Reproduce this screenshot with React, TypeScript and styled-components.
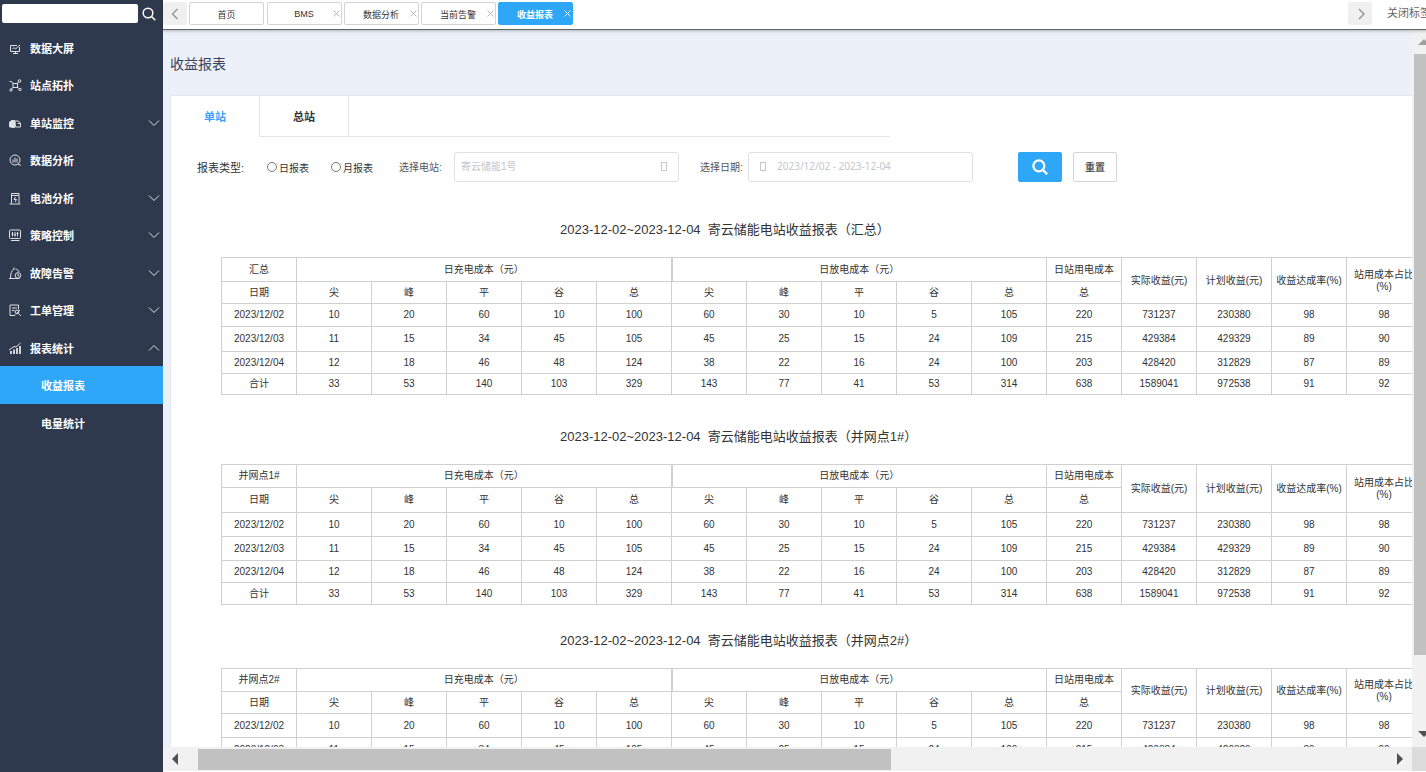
import React from "react";
import styled, { createGlobalStyle, css } from "styled-components";

const Global = createGlobalStyle`
  *, *::before, *::after { box-sizing: border-box; }
  body { margin: 0; }
  body, button, input, select {
    font-family: "Liberation Sans", "Noto Sans CJK SC", sans-serif;
  }
  body { overflow: hidden; color: #333; font-size: 11px; }
`;

const Shell = styled.div`
  display: flex;
  height: 100vh;
  overflow: hidden;
  background: #fff;
`;

/* ---------- sidebar ---------- */

const Sidebar = styled.aside`
  flex: 0 0 163px;
  background: #2f394d;
`;

const SearchRow = styled.form`
  display: flex;
  align-items: center;
  gap: 4px;
  height: 29px;
  padding: 0 2px 2px;
`;

const SearchInput = styled.input`
  width: 136px;
  height: 19px;
  border: 0;
  border-radius: 2px;
  background: #fff;
`;

const PlainButton = styled.button`
  display: flex;
  padding: 0;
  border: 0;
  background: none;
  color: inherit;
  cursor: pointer;
`;

const SearchIconButton = styled(PlainButton)`
  color: #fff;
`;

const Menu = styled.nav`
  display: flex;
  flex-direction: column;
`;

const MenuLink = styled.a<{ $sub?: boolean; $active?: boolean }>`
  display: flex;
  align-items: center;
  gap: 8px;
  height: 37px;
  padding: 0 3px 0 ${(p) => (p.$sub ? "41px" : "8px")};
  background: ${(p) => (p.$active ? "#2ea7f9" : "transparent")};
  color: #fff;
  font-size: 11px;
  font-weight: 700;
  text-decoration: none;

  &:nth-child(even) {
    height: 38px;
  }

  svg {
    opacity: 0.85;
  }
`;

const MenuText = styled.span`
  flex: 1;
`;

/* ---------- top tabs ---------- */

const Workspace = styled.div`
  display: flex;
  flex: 1;
  flex-direction: column;
  min-width: 0;
  margin-right: -10px;
`;

const TopBar = styled.header`
  z-index: 1;
  display: flex;
  flex: 0 0 30px;
  align-items: flex-start;
  padding-top: 2px;
  border-bottom: 1px solid #5f6565;
  background: #fff;
  box-shadow: 0 1px 3px rgba(0, 0, 0, 0.25);
`;

const ArrowButton = styled(PlainButton)`
  align-items: center;
  justify-content: center;
  width: 24px;
  height: 23px;
  border-radius: 2px;
  background: #f0f0f0;
  color: #999;
`;

const PageTabs = styled.div`
  display: flex;
  flex: 1;
  gap: 2px;
  margin-left: 2px;
`;

const PageTab = styled.div<{ $active?: boolean }>`
  display: flex;
  align-items: center;
  width: 75px;
  height: 23px;
  padding-right: 1px;
  border: 1px solid ${(p) => (p.$active ? "#2ea7f9" : "#d4d4d4")};
  border-radius: 2px;
  background: ${(p) => (p.$active ? "#2ea7f9" : "#fff")};
  color: ${(p) => (p.$active ? "#fff" : "#333")};
  font-weight: ${(p) => (p.$active ? 700 : 400)};

  &:first-child {
    margin-right: 1px;
  }
`;

const PageTabName = styled.a<{ $closable: boolean }>`
  flex: 1;
  padding: 1px 0 0 ${(p) => (p.$closable ? "7px" : "1px")};
  color: inherit;
  font-size: 9px;
  text-align: center;
  text-decoration: none;
`;

const TabClose = styled(PlainButton)<{ $active?: boolean }>`
  color: ${(p) => (p.$active ? "#fff" : "#b5b5b5")};
`;

const CloseTabs = styled(PlainButton)`
  width: 49px;
  margin-left: 15px;
  padding-top: 3px;
  color: #666;
  font-size: 11px;
  line-height: 16px;
  white-space: nowrap;
`;

/* ---------- scroll frame ---------- */

const Frame = styled.div`
  display: grid;
  flex: 1;
  grid-template-columns: minmax(0, 1fr) 24px;
  grid-template-rows: minmax(0, 1fr) 24px;
  min-height: 0;
  padding-bottom: 1px;
`;

const Viewport = styled.main`
  overflow: hidden;
  padding-left: 7px;
  background: #ebf0f9;
`;

const bar = css`
  display: flex;
  align-items: center;
  background: #f1f1f1;
  color: #505050;
`;

const VBar = styled.div`
  ${bar}
  flex-direction: column;
  padding: 6px 0 7px;

  svg:first-child {
    color: #a0a0a0;
  }
`;

const HBar = styled.div`
  ${bar}
  padding: 0 8px;
`;

const VTrack = styled.div`
  flex: 1;
  align-self: stretch;
  margin: 6px 2px;
`;

const HTrack = styled.div`
  flex: 1;
  align-self: stretch;
  margin: 2px 19px 1px 15px;
`;

const VThumb = styled.div`
  height: 90%;
  background: #c1c1c1;
`;

const HThumb = styled.div`
  width: 59%;
  height: 100%;
  background: #c1c1c1;
`;

const Corner = styled.div`
  background: #dcdcdc;
`;

/* ---------- page ---------- */

const PageTitle = styled.h1`
  margin: 0;
  padding: 24px 0 20px;
  color: #38435a;
  font-size: 14px;
  font-weight: 400;
  line-height: 21px;
`;

const Panel = styled.section`
  min-width: 1300px;
  min-height: 100%;
  border: 1px solid #e4e7ec;
  background: #fff;
`;

const StationTabs = styled.div`
  display: flex;
  width: 719px;
  height: 41px;
`;

const StationTab = styled.button<{ $active?: boolean }>`
  width: 89px;
  padding: 0 0 ${(p) => (p.$active ? "1px" : "0")};
  border: solid #e4e4e4;
  border-width: 0 1px ${(p) => (p.$active ? "0" : "1px")} 0;
  background: none;
  color: ${(p) => (p.$active ? "#409eff" : "#333")};
  font-size: 11px;
  font-weight: 700;
`;

const TabRule = styled.div`
  flex: 1;
  border-bottom: 1px solid #e4e4e4;
`;

const Filters = styled.form`
  display: flex;
  align-items: center;
  height: 30px;
  margin: 15px 0 0 26px;
`;

const RadioGroup = styled.fieldset`
  display: flex;
  align-items: center;
  width: 202px;
  margin: 0;
  padding: 0;
  border: 0;
  font-size: 11px;
`;

const GroupName = styled.span`
  width: 70px;
`;

const RadioLabel = styled.label`
  display: flex;
  align-items: center;
  gap: 2px;
  width: 64px;
  font-size: 10px;
`;

const Radio = styled.input`
  appearance: none;
  width: 10px;
  height: 10px;
  margin: 0;
  border: 1px solid #767676;
  border-radius: 50%;
`;

const Field = styled.div`
  display: flex;
  align-items: center;
  margin-right: 21px;
`;

const FieldLabel = styled.label<{ $width: number }>`
  width: ${(p) => p.$width}px;
  padding-bottom: 2px;
  color: #555;
  font-size: 10px;
`;

const FieldBox = styled.div`
  display: flex;
  align-items: center;
  width: 225px;
  height: 30px;
  padding: 0 11px 2px 6px;
  border: 1px solid #dfdfdf;
  border-radius: 3px;
`;

const fieldText = css`
  flex: 1;
  min-width: 0;
  padding: 0;
  border: 0;
  outline: 0;
  background: none;
  color: #c3c6cc;
`;

const Select = styled.select`
  ${fieldText}
  appearance: none;
  font-size: 10px;
`;

const DateInput = styled.input`
  ${fieldText}
  margin-left: 11px;
  font-family: "Noto Sans", "Open Sans", sans-serif;
  font-size: 10px;
`;

const GlyphBox = styled.span`
  width: 6px;
  height: 9px;
  margin-left: 5px;
  border: 1px solid #c8c8c8;
`;

const Action = styled.button<{ $primary?: boolean }>`
  display: flex;
  align-items: center;
  justify-content: center;
  width: 44px;
  height: 30px;
  margin-left: ${(p) => (p.$primary ? "24px" : "11px")};
  padding: 0 0 1px;
  border: 1px solid ${(p) => (p.$primary ? "#2ea7f9" : "#d4d4d4")};
  border-radius: 2px;
  background: ${(p) => (p.$primary ? "#2ea7f9" : "#fff")};
  color: ${(p) => (p.$primary ? "#fff" : "#555")};
  font-size: 10px;
  font-weight: 700;
`;

const Report = styled.table<{ $gap: number }>`
  width: 1201px;
  margin: ${(p) => p.$gap}px 0 0 50px;
  border-collapse: collapse;
  table-layout: fixed;
  color: #333;
  font-size: 10px;
  line-height: 12px;
`;

const Caption = styled.caption`
  padding: 0 0 17px 339px;
  color: #333;
  font-size: 13px;
  line-height: 20px;
  text-align: left;
  white-space: pre;
`;

const Row = styled.tr<{ $h: number }>`
  height: ${(p) => p.$h}px;
`;

const cell = css`
  padding: 0;
  border: 1px solid #d0d0d0;
  text-align: center;
  font-weight: 400;
`;

const Th = styled.th<{ $divider?: boolean }>`
  ${cell}
  ${(p) => p.$divider && "border-right-width: 2px;"}
`;

const Td = styled.td`
  ${cell}
`;

/* ---------- icons ---------- */

const Svg = ({ size = 14, sw = 1, children }: { size?: number; sw?: number; children: React.ReactNode }) => (
  <svg width={size} height={size} viewBox="0 0 14 14" fill="none" stroke="currentColor" strokeWidth={sw} aria-hidden="true">
    {children}
  </svg>
);

const Magnifier = ({ size, sw }: { size: number; sw: number }) => (
  <Svg size={size} sw={sw}>
    <circle cx="6" cy="6" r="4.8" />
    <path d="M9.5 9.5 13.3 13.3" />
  </Svg>
);

const Chevron = ({ d, sw = 1 }: { d: string; sw?: number }) => (
  <svg width="12" height="12" viewBox="0 0 12 12" fill="none" stroke="currentColor" strokeWidth={sw} aria-hidden="true">
    <path d={d} />
  </svg>
);

const Triangle = ({ d }: { d: string }) => (
  <svg width="12" height="12" viewBox="0 0 12 12" fill="currentColor" aria-hidden="true">
    <path d={d} />
  </svg>
);

const icons: Record<string, React.ReactNode> = {
  screen: (
    <>
      <path d="M11.5 6V10.500h-9v-6H9" />
      <path d="M5 12.500h5M7.500 10.500v2M4.500 8l1.500-1.500L7.500 8l4.500-4" />
    </>
  ),
  topo: (
    <>
      <rect x="5" y="5.500" width="4.500" height="4" />
      <circle cx="11.500" cy="3" r="1.300" />
      <circle cx="3" cy="12" r="1.200" />
      <circle cx="12" cy="11.500" r="1.200" />
      <path d="M1.500 3.500h2L5 5.500M9.500 5.500l1-1.500M5 9.500l-1.500 1.500M9.500 9.500l1.500 1" />
    </>
  ),
  monitor: (
    <>
      <path d="M1.500 6 3 5v6H1.500zM3.500 4.500h3v7h-3z" fill="currentColor" />
      <path d="M7 5h3l2.500 2v4H7.500zM9.500 7.500h3" />
    </>
  ),
  analysis: (
    <>
      <circle cx="7" cy="7" r="5" />
      <path d="M5 6.500v3M7 4.500v5M9 5.500v4M10 11l3 1.500" />
    </>
  ),
  battery: (
    <>
      <path d="M3.500 12.500v-10h7.500v10M1.500 13h11M4 4.500h6.500" />
      <path d="M7.500 6 6 8.500h2.500L7 11" />
    </>
  ),
  strategy: (
    <>
      <rect x="1.500" y="2" width="11" height="8.500" rx="1" />
      <path d="M4.500 4v4.500M7 4v4.500M9.500 4v4.500M3.500 6h2M6 7h2M8.500 5.500h2M3 12.500h8.500" />
    </>
  ),
  alarm: (
    <>
      <path d="M1 12.500h5.500M2.500 12.500C2.500 7.500 3.500 4.500 6 3M6 1.500v2" />
      <path d="M7.500 3c2 .5 3 1.500 3.500 3" />
      <circle cx="10" cy="9.500" r="2.800" />
      <path d="M10 8v2h1.500M6.500 12.500h5" />
    </>
  ),
  work: (
    <>
      <path d="M10.500 6.500V2h-8.500v10.500H7M4 5h5M4 7.500h2.500" />
      <circle cx="9" cy="9" r="1.800" />
      <path d="M12 7 7.500 11.500M10.500 10.500l2.500 2.500" />
    </>
  ),
  report: (
    <>
      <path d="M3 13v-3M6 13V8.500M9 13V7M12 13V5" strokeWidth="1.800" />
      <path d="M1 9 6 5.500 8 6l4.500-4" />
    </>
  ),
};

/* ---------- data ---------- */

const menu = [
  { icon: "screen", name: "数据大屏" },
  { icon: "topo", name: "站点拓扑" },
  { icon: "monitor", name: "单站监控", arrow: "down" },
  { icon: "analysis", name: "数据分析" },
  { icon: "battery", name: "电池分析", arrow: "down" },
  { icon: "strategy", name: "策略控制", arrow: "down" },
  { icon: "alarm", name: "故障告警", arrow: "down" },
  { icon: "work", name: "工单管理", arrow: "down" },
  { icon: "report", name: "报表统计", arrow: "up" },
];

const body = [
  ["2023/12/02", 10, 20, 60, 10, 100, 60, 30, 10, 5, 105, 220, 731237, 230380, 98, 98],
  ["2023/12/03", 11, 15, 34, 45, 105, 45, 25, 15, 24, 109, 215, 429384, 429329, 89, 90],
  ["2023/12/04", 12, 18, 46, 48, 124, 38, 22, 16, 24, 100, 203, 428420, 312829, 87, 89],
  ["合计", 33, 53, 140, 103, 329, 143, 77, 41, 53, 314, 638, 1589041, 972538, 91, 92],
];

const periods = ["尖", "峰", "平", "谷", "总"];

const reports = [
  { name: "汇总", gap: 38, rows: [24, 22, 23, 25, 22, 21] },
  { name: "并网点1#", gap: 32, rows: [23, 25, 24, 24, 22, 22] },
  { name: "并网点2#", gap: 26, rows: [23, 22, 24, 24, 22, 22] },
];

const ReportTable = ({ name, gap, rows }: { name: string; gap: number; rows: number[] }) => (
  <Report $gap={gap}>
    <Caption>{`2023-12-02~2023-12-04  寄云储能电站收益报表（${name}）`}</Caption>
    <thead>
      <Row $h={rows[0]}>
        <Th>{name}</Th>
        <Th colSpan={5} $divider>日充电成本（元）</Th>
        <Th colSpan={5}>日放电成本（元）</Th>
        <Th>日站用电成本</Th>
        <Th rowSpan={2}>实际收益(元)</Th>
        <Th rowSpan={2}>计划收益(元)</Th>
        <Th rowSpan={2}>收益达成率(%)</Th>
        <Th rowSpan={2}>站用成本占比(%)</Th>
      </Row>
      <Row $h={rows[1]}>
        <Th>日期</Th>
        {[...periods, ...periods, "总"].map((p, i) => (
          <Th key={i}>{p}</Th>
        ))}
      </Row>
    </thead>
    <tbody>
      {body.map((r, i) => (
        <Row key={i} $h={rows[i + 2]}>
          {r.map((v, j) => (
            <Td key={j}>{v}</Td>
          ))}
        </Row>
      ))}
    </tbody>
  </Report>
);

export default function App() {
  return (
    <Shell>
      <Global />
      <Sidebar>
        <SearchRow>
          <SearchInput aria-label="搜索" />
          <SearchIconButton type="button" aria-label="搜索"><Magnifier size={14} sw={1.5} /></SearchIconButton>
        </SearchRow>
        <Menu>
          {menu.map((m) => (
            <MenuLink key={m.name} href="#">
              <Svg>{icons[m.icon]}</Svg>
              <MenuText>{m.name}</MenuText>
              {m.arrow && <Chevron d={m.arrow === "down" ? "M1 3.500 6 8.500 11 3.500" : "M1 8.500 6 3.500 11 8.500"} />}
            </MenuLink>
          ))}
          <MenuLink href="#" $sub $active><MenuText>收益报表</MenuText></MenuLink>
          <MenuLink href="#" $sub><MenuText>电量统计</MenuText></MenuLink>
        </Menu>
      </Sidebar>
      <Workspace>
        <TopBar>
          <ArrowButton aria-label="向左"><Chevron d="M8.500 1 3.500 6l5 5" sw={1.5} /></ArrowButton>
          <PageTabs>
            {["首页", "BMS", "数据分析", "当前告警", "收益报表"].map((t, i) => (
              <PageTab key={t} $active={i === 4}>
                <PageTabName href="#" $closable={i > 0}>{t}</PageTabName>
                {i > 0 && (
                  <TabClose $active={i === 4} aria-label="关闭">
                    <svg width="7" height="7" viewBox="0 0 7 7" stroke="currentColor" aria-hidden="true"><path d="M.5.5l6 6M6.500.5l-6 6" /></svg>
                  </TabClose>
                )}
              </PageTab>
            ))}
          </PageTabs>
          <ArrowButton aria-label="向右"><Chevron d="M5 1l5 5-5 5" sw={1.5} /></ArrowButton>
          <CloseTabs>关闭标签</CloseTabs>
        </TopBar>
        <Frame>
          <Viewport>
            <PageTitle>收益报表</PageTitle>
            <Panel>
              <StationTabs>
                <StationTab $active>单站</StationTab>
                <StationTab>总站</StationTab>
                <TabRule />
              </StationTabs>
              <Filters>
                <RadioGroup>
                  <GroupName>报表类型:</GroupName>
                  <RadioLabel><Radio type="radio" name="kind" />日报表</RadioLabel>
                  <RadioLabel><Radio type="radio" name="kind" />月报表</RadioLabel>
                </RadioGroup>
                <Field>
                  <FieldLabel htmlFor="station" $width={55}>选择电站:</FieldLabel>
                  <FieldBox>
                    <Select id="station"><option>寄云储能1号</option></Select>
                    <GlyphBox />
                  </FieldBox>
                </Field>
                <Field>
                  <FieldLabel htmlFor="range" $width={48}>选择日期:</FieldLabel>
                  <FieldBox>
                    <GlyphBox />
                    <DateInput id="range" defaultValue="2023/12/02 - 2023-12-04" />
                  </FieldBox>
                </Field>
                <Action type="button" $primary aria-label="查询"><Magnifier size={16} sw={2} /></Action>
                <Action type="reset">重置</Action>
              </Filters>
              {reports.map((r) => (
                <ReportTable key={r.name} {...r} />
              ))}
            </Panel>
          </Viewport>
          <VBar>
            <Triangle d="M0 9 6 3 12 9z" />
            <VTrack><VThumb /></VTrack>
            <Triangle d="M0 3 6 9 12 3z" />
          </VBar>
          <HBar>
            <Triangle d="M7 0 1 6 7 12z" />
            <HTrack><HThumb /></HTrack>
            <Triangle d="M5 0 11 6 5 12z" />
          </HBar>
          <Corner />
        </Frame>
      </Workspace>
    </Shell>
  );
}
